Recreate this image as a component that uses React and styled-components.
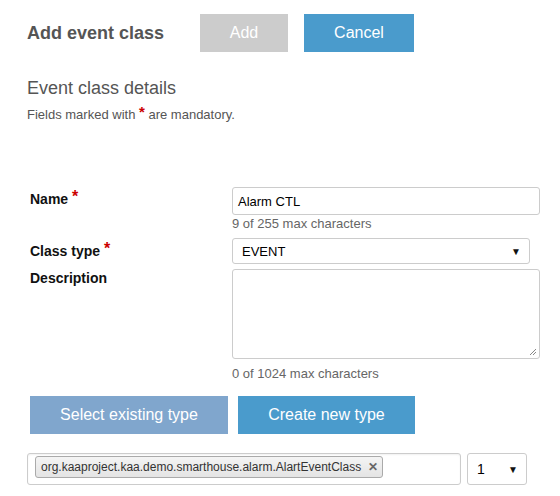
import React from 'react';
import styled, { createGlobalStyle } from 'styled-components';

const GlobalStyle = createGlobalStyle`
  body {
    margin: 0;
    background: #fff;
    font-family: "Liberation Sans", Arial, sans-serif;
  }
`;

const Page = styled.div`
  width: 560px;
  height: 496px;
  padding-left: 27px;
  box-sizing: border-box;
  overflow: hidden;
`;

const Header = styled.div`
  display: flex;
  align-items: center;
  padding-top: 14px;
`;

const Title = styled.h1`
  margin: 0;
  width: 173px;
  font-size: 18px;
  font-weight: bold;
  color: #555;
`;

const Button = styled.button`
  height: 38px;
  width: ${p => p.$width}px;
  margin-right: ${p => p.$gap || 0}px;
  border: none;
  border-radius: 0;
  padding: 0;
  background: ${p => p.$bg};
  color: #fff;
  font-family: "Liberation Sans", Arial, sans-serif;
  font-size: 16px;
`;

const SectionTitle = styled.h2`
  margin: 26px 0 0;
  font-size: 18px;
  line-height: 20px;
  font-weight: normal;
  color: #555;
`;

const Note = styled.p`
  margin: 8px 0 0;
  font-size: 13px;
  line-height: 16px;
  color: #555;
`;

const Star = styled.span`
  color: #c00;
  font-weight: bold;
  font-size: ${p => p.$size || 16}px;
  position: relative;
  top: -2px;
`;

const Form = styled.div`
  display: grid;
  grid-template-columns: 202px 308px;
  margin: 64px 0 0 3px;
`;

const Label = styled.div`
  font-size: 14px;
  font-weight: bold;
  color: #111;
  padding-top: ${p => p.$pt || 0}px;
  line-height: 16px;
`;

const Field = styled.div`
  display: flex;
  flex-direction: column;
  margin-top: ${p => p.$mt || 0}px;
`;

const TextInput = styled.div`
  height: 28px;
  box-sizing: border-box;
  border: 1px solid #ccc;
  border-radius: 3px;
  padding: 0 5px;
  display: flex;
  align-items: center;
  font-size: 13px;
  color: #000;
`;

const Select = styled.div`
  height: ${p => p.$h || 26}px;
  width: ${p => p.$w ? `${p.$w}px` : 'auto'};
  box-sizing: border-box;
  border: 1px solid #ccc;
  border-radius: 3px;
  padding: 0 8px 0 ${p => p.$pl || 9}px;
  display: flex;
  align-items: center;
  justify-content: space-between;
  font-size: ${p => p.$fs || 13}px;
  color: #000;
  margin-right: ${p => p.$mr || 0}px;
  flex-shrink: 0;
`;

const Arrow = styled.span`
  font-size: 10px;
  color: #111;
`;

const TextArea = styled.div`
  height: 90px;
  box-sizing: border-box;
  border: 1px solid #ccc;
  border-radius: 3px;
  position: relative;
`;

const Grip = styled.svg`
  position: absolute;
  right: 2px;
  bottom: 2px;
`;

const Help = styled.div`
  font-size: 13px;
  line-height: 16px;
  color: #666;
  margin-top: ${p => p.$mt || 0}px;
`;

const ButtonRow = styled.div`
  display: flex;
  margin: 14px 0 0 3px;
`;

const BottomRow = styled.div`
  display: flex;
  margin-top: 19px;
`;

const MultiBox = styled.div`
  width: 434px;
  height: 32px;
  box-sizing: border-box;
  border: 1px solid #ccc;
  border-radius: 3px;
  box-shadow: inset 0 1px 2px rgba(0, 0, 0, 0.06);
  padding: 2px 0 0 7px;
  margin-right: 6px;
`;

const Tag = styled.div`
  display: inline-flex;
  align-items: center;
  height: 22px;
  box-sizing: border-box;
  padding: 0 4px 0 5px;
  border: 1px solid #aaa;
  border-radius: 3px;
  background: linear-gradient(#f4f4f4, #e4e4e4);
  font-size: 12px;
  color: #333;
`;

const Close = styled.span`
  margin-left: 7px;
  font-size: 12px;
  font-weight: bold;
  color: #666;
`;

export default function App() {
  return (
    <Page>
      <GlobalStyle />
      <Header>
        <Title>Add event class</Title>
        <Button $bg="#cccccc" $width={88} $gap={16}>Add</Button>
        <Button $bg="#4a9bcc" $width={110}>Cancel</Button>
      </Header>

      <SectionTitle>Event class details</SectionTitle>
      <Note>Fields marked with <Star $size={15}>*</Star> are mandatory.</Note>

      <Form>
        <Label $pt={4}>Name <Star>*</Star></Label>
        <Field>
          <TextInput>Alarm CTL</TextInput>
          <Help $mt={1}>9 of 255 max characters</Help>
        </Field>

        <Label $pt={11}>Class type <Star>*</Star></Label>
        <Field $mt={6} style={{ width: 298 }}>
          <Select>EVENT<Arrow>▼</Arrow></Select>
        </Field>

        <Label $pt={6}>Description</Label>
        <Field $mt={5}>
          <TextArea>
            <Grip width="8" height="8" viewBox="0 0 8 8">
              <path d="M7 1 L1 7 M7 4 L4 7" stroke="#888" strokeWidth="1" />
            </Grip>
          </TextArea>
          <Help $mt={7}>0 of 1024 max characters</Help>
        </Field>
      </Form>

      <ButtonRow>
        <Button $bg="#80a6cd" $width={198} $gap={10}>Select existing type</Button>
        <Button $bg="#4a9bcc" $width={177}>Create new type</Button>
      </ButtonRow>

      <BottomRow>
        <MultiBox>
          <Tag>org.kaaproject.kaa.demo.smarthouse.alarm.AlartEventClass<Close>✕</Close></Tag>
        </MultiBox>
        <Select $h={32} $w={60} $pl={9} $fs={14}>1<Arrow>▼</Arrow></Select>
      </BottomRow>
    </Page>
  );
}
